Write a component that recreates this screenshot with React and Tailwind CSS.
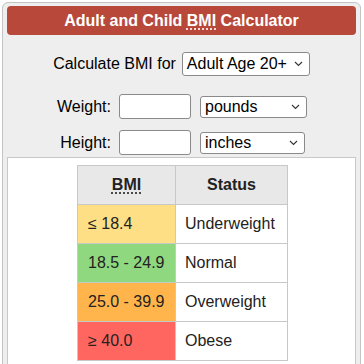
import React from 'react';

const Chevron = () => (
  <svg width="9" height="6" viewBox="0 0 9 6" className="shrink-0">
    <path d="M1 1l3.5 3.5L8 1" fill="none" stroke="#333" strokeWidth="1.1" />
  </svg>
);

const FakeSelect = ({ value, className }) => (
  <div
    className={`flex items-center justify-between bg-white border border-[#8a8a8a] rounded-[3px] pl-[4px] pr-[6px] text-[16px] text-black leading-none ${className}`}
  >
    <span>{value}</span>
    <Chevron />
  </div>
);

const rows = [
  { bmi: '≤ 18.4', status: 'Underweight', bg: 'bg-[#ffdf85]' },
  { bmi: '18.5 - 24.9', status: 'Normal', bg: 'bg-[#8fd880]' },
  { bmi: '25.0 - 39.9', status: 'Overweight', bg: 'bg-[#ffb54c]' },
  { bmi: '≥ 40.0', status: 'Obese', bg: 'bg-[#ff6660]' },
];

const App = () => {
  return (
    <div className="w-[364px] h-[364px] overflow-hidden bg-white font-['Liberation_Sans',Arial,sans-serif] pt-[2px] pl-[2px]">
      <div className="w-[359px] h-[400px] border border-[#c4c4c4] rounded-[6px] bg-[#eeeeee] px-[4px] pt-[3px]">
        <div className="h-[29px] rounded-[4px] bg-[#b8493a] flex items-center justify-center text-white font-bold text-[16px]">
          Adult and Child&nbsp;
          <span className="underline decoration-dotted decoration-white underline-offset-[3px]">BMI</span>
          &nbsp;Calculator
        </div>

        <div className="mt-[17px] flex items-center justify-center text-[16px] text-black">
          <span>Calculate BMI for</span>
          <FakeSelect value="Adult Age 20+" className="ml-[6px] w-[128px] h-[24px]" />
        </div>

        <div className="mt-[18px] flex items-center pl-[44px] text-[16px] text-black">
          <span className="w-[60px] text-right">Weight:</span>
          <div className="ml-[8px] w-[72px] h-[25px] bg-white border border-[#8a8a8a] rounded-[3px]" />
          <FakeSelect value="pounds" className="ml-[9px] w-[107px] h-[22px]" />
        </div>

        <div className="mt-[11px] flex items-center pl-[44px] text-[16px] text-black">
          <span className="w-[60px] text-right">Height:</span>
          <div className="ml-[8px] w-[72px] h-[25px] bg-white border border-[#8a8a8a] rounded-[3px]" />
          <FakeSelect value="inches" className="ml-[9px] w-[105px] h-[22px]" />
        </div>

        <div className="mt-[2px] h-[300px] bg-white border border-[#c8c8c8] pt-[7px]">
          <table className="ml-[69px] border-collapse text-[16px] text-[#222]">
            <thead>
              <tr className="bg-[#e8e8e8]">
                <th className="w-[98px] h-[39px] border border-[#c8c8c8] font-bold">
                  <span className="underline decoration-dotted underline-offset-[3px]">BMI</span>
                </th>
                <th className="w-[112px] h-[39px] border border-[#c8c8c8] font-bold">Status</th>
              </tr>
            </thead>
            <tbody>
              {rows.map((r) => (
                <tr key={r.status}>
                  <td className={`h-[39px] border border-[#c8c8c8] pl-[10px] ${r.bg}`}>{r.bmi}</td>
                  <td className="h-[39px] border border-[#c8c8c8] pl-[9px] bg-white">{r.status}</td>
                </tr>
              ))}
            </tbody>
          </table>
        </div>
      </div>
    </div>
  );
};

export default App;
